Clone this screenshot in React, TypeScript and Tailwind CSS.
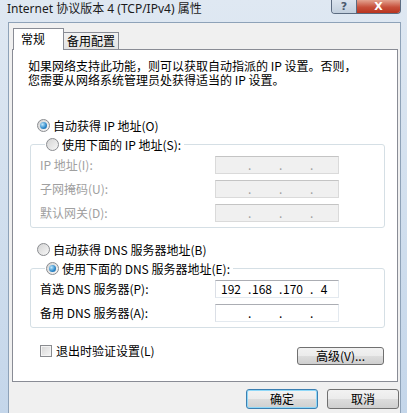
import type { ReactNode } from 'react';

const cjk = "font-['Noto_Sans_CJK_SC','Noto_Sans',sans-serif]";

function Radio({ checked, children }: { checked?: boolean; children: ReactNode }) {
  return (
    <span className="flex items-center h-[19px] gap-[3px] text-[12px] leading-none text-black whitespace-nowrap">
      <span className="flex items-center justify-center w-[13px] h-[13px] rounded-full border border-[#8a8c90] bg-[linear-gradient(135deg,#d4d4d4,#f7f7f7)]">
        {checked && (
          <span className="w-[7px] h-[7px] rounded-full bg-[radial-gradient(circle_at_35%_35%,#bfe7fb,#2a86c8_60%,#185a9a)]" />
        )}
      </span>
      <span>{children}</span>
    </span>
  );
}

function IpBox({ value, disabled }: { value?: string[]; disabled?: boolean }) {
  const parts = value ?? ['', '', '', ''];
  return (
    <div
      className={`flex items-center w-[124px] h-[18px] border pl-[1px] text-[12px] leading-none ${
        disabled
          ? 'bg-[#f0f0f0] border-[#dadada] border-t-[#c4c4c4] text-[#a0a0a0]'
          : 'bg-white border-[#e3e9ef] border-t-[#abadb3] border-l-[#dbdfe6] text-black'
      }`}
    >
      {parts.map((p, i) => (
        <div key={i} className="flex items-center">
          <span className="w-[28px] text-center">{p}</span>
          {i < 3 && <span className="w-[3px] ml-[3px] -mr-[3px]">.</span>}
        </div>
      ))}
    </div>
  );
}

function Field({ label, value, disabled }: { label: string; value?: string[]; disabled?: boolean }) {
  return (
    <div className="flex items-center h-[18px]">
      <span className={`w-[175px] flex-none text-[12px] leading-none ${disabled ? 'text-[#a0a0a0]' : 'text-black'}`}>{label}</span>
      <IpBox value={value} disabled={disabled} />
    </div>
  );
}

function WinButton({ children, isDefault, className = '' }: { children: ReactNode; isDefault?: boolean; className?: string }) {
  return (
    <div
      className={`flex items-center justify-center rounded-[3px] border text-[12px] leading-none text-black bg-[linear-gradient(#f2f2f2,#ebebeb_50%,#dddddd_50%,#cfcfcf)] ${
        isDefault ? 'border-[#3c7fb1] shadow-[inset_0_0_0_1px_#8fd8f8]' : 'border-[#707070]'
      } ${className}`}
    >
      {children}
    </div>
  );
}

export default function App() {
  return (
    <div className={`w-[407px] h-[413px] overflow-hidden flex flex-col bg-[linear-gradient(180deg,#dfe8f2,#c4d6ea)] ${cjk}`}>
      {/* 标题栏 */}
      <div className="flex h-[22px] flex-none">
        <div className="flex-1 pl-[7px] pt-[1px] text-[12px] leading-[16px] text-[#1b1b1b] font-['Noto_Sans','Noto_Sans_CJK_SC',sans-serif]">
          Internet 协议版本 4 (TCP/IPv4) 属性
        </div>
        <div className="flex h-[14px] mr-[6px] rounded-b-[4px] border border-t-0 border-[#5b6b80] overflow-hidden">
          <div className="w-[25px] flex items-center justify-center bg-[linear-gradient(#dbe4ee,#c2cfdd)] text-[11px] leading-none font-bold text-[#4a5a6e] border-r border-[#5b6b80] font-['DejaVu_Sans',sans-serif]">
            ?
          </div>
          <div className="w-[43px] flex items-center justify-center bg-[linear-gradient(#e3a390,#c7503b_55%,#b8341f)] text-[11px] leading-none font-bold text-white font-['DejaVu_Sans',sans-serif]">
            X
          </div>
        </div>
      </div>

      {/* 客户区 */}
      <div className="flex flex-1 min-h-0">
        <div className="w-[8px] flex-none" />
        <div className="flex-1 bg-[#f0f0f0] border-l border-t border-r border-[#8ea2b8] pl-[3px] pr-[1px] pt-[5px] flex flex-col">
          {/* 选项卡 */}
          <div className="flex items-end ml-[1px] h-[21px]">
            <div className="relative z-10 -mb-[1px] w-[51px] h-[22px] bg-white border border-b-0 border-[#898c95] pl-[7px] pt-[1px] text-[12px] leading-[18px] text-black">
              常规
            </div>
            <div className="-ml-[1px] w-[56px] h-[17px] border border-b-0 border-[#898c95] bg-[linear-gradient(#f2f2f2,#e3e3e3)] flex items-center justify-center text-[12px] leading-none text-black">
              备用配置
            </div>
          </div>

          {/* 面板 */}
          <div className="w-[386px] h-[333px] bg-white border border-[#898c95] flex flex-col">
            <div className="pl-[15px] pt-[9px] text-[12px] leading-[14px] text-black">
              <div>如果网络支持此功能，则可以获取自动指派的 IP 设置。否则，</div>
              <div>您需要从网络系统管理员处获得适当的 IP 设置。</div>
            </div>

            <div className="ml-[24px] mt-[29px]">
              <Radio checked>自动获得 IP 地址(O)</Radio>
            </div>

            <fieldset className="ml-[17px] w-[355px] border border-[#d5dfe5] rounded-[3px] pl-[9px] pb-[5px] leading-none">
              <legend className="ml-[5px] pl-[1px] pr-[3px]">
                <Radio>使用下面的 IP 地址(S):</Radio>
              </legend>
              <div className="flex flex-col gap-[6px] pt-[2px]">
                <Field label="IP 地址(I):" disabled />
                <Field label="子网掩码(U):" disabled />
                <Field label="默认网关(D):" disabled />
              </div>
            </fieldset>

            <div className="ml-[24px] mt-[12px]">
              <Radio>自动获得 DNS 服务器地址(B)</Radio>
            </div>

            <fieldset className="ml-[17px] w-[355px] border border-[#d5dfe5] rounded-[3px] pl-[9px] pb-[5px] leading-none">
              <legend className="ml-[5px] pl-[1px] pr-[3px]">
                <Radio checked>使用下面的 DNS 服务器地址(E):</Radio>
              </legend>
              <div className="flex flex-col gap-[6px] pt-[2px]">
                <Field label="首选 DNS 服务器(P):" value={['192', '168', '170', '4']} />
                <Field label="备用 DNS 服务器(A):" />
              </div>
            </fieldset>

            <div className="flex items-start justify-between ml-[27px] mr-[13px] mt-[14px]">
              <span className="flex items-center h-[18px] gap-[4px] text-[12px] leading-none text-black">
                <span className="w-[12px] h-[12px] border border-[#8a8c90] bg-[linear-gradient(135deg,#d6d6d6,#f6f6f6)] shadow-[inset_0_0_0_1px_#f4f4f4]" />
                退出时验证设置(L)
              </span>
              <WinButton className="mt-[5px] w-[87px] h-[18px]">高级(V)...</WinButton>
            </div>
          </div>

          {/* 底部按钮 */}
          <div className="flex justify-end gap-[9px] mt-[7px]">
            <WinButton isDefault className="w-[72px] h-[20px]">确定</WinButton>
            <WinButton className="w-[72px] h-[20px]">取消</WinButton>
          </div>
        </div>
        <div className="w-[6px] flex-none" />
      </div>
    </div>
  );
}
